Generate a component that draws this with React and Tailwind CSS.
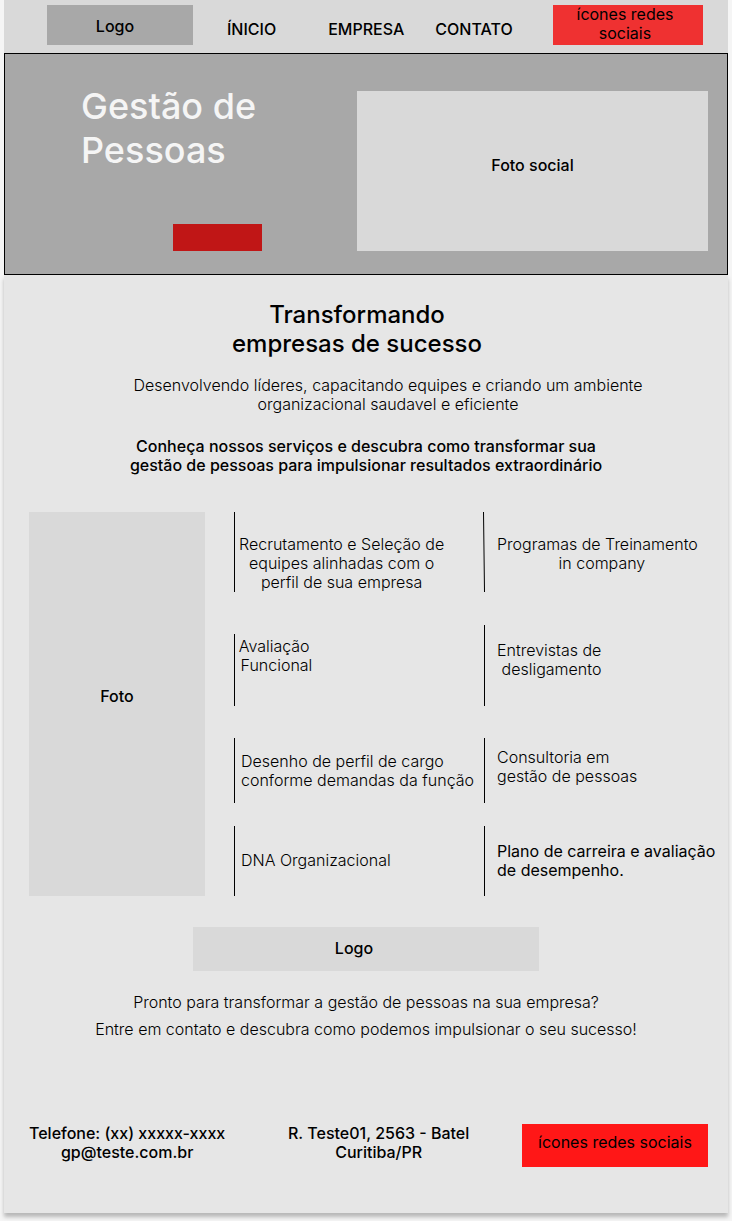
const leftServices = [
  {
    lines: ['Recrutamento e Seleção de', 'equipes alinhadas com o', 'perfil de sua empresa'],
    box: 'h-20 pt-[23px] pl-1 border-l',
    text: 'text-center',
  },
  {
    lines: ['Avaliação', ' Funcional'],
    box: 'mt-[42px] h-[72px] pt-[3px] pl-px border-l',
    text: 'text-center',
  },
  {
    lines: ['Desenho de perfil de cargo', 'conforme demandas da função'],
    box: 'mt-8 h-[65px] pt-[14px] pl-[6px] border-l',
    text: 'text-left',
  },
  {
    lines: ['DNA Organizacional'],
    box: 'mt-[23px] h-[70px] pt-[25px] pl-[6px] border-l',
    text: 'text-left',
  },
];

const rightServices = [
  {
    lines: ['Programas de Treinamento', '  in company'],
    box: 'h-20 pt-[23px] pl-[13px]',
    text: 'text-center',
    slanted: true,
  },
  {
    lines: ['Entrevistas de', 'desligamento'],
    box: 'mt-[33px] h-[81px] pt-4 pl-3 border-l',
    text: 'text-right',
  },
  {
    lines: ['Consultoria em', 'gestão de pessoas'],
    box: 'mt-8 h-[65px] pt-[10px] pl-3 border-l',
    text: 'text-left',
  },
  {
    lines: ['Plano de carreira e avaliação', 'de desempenho.'],
    box: 'mt-[23px] h-[70px] pt-4 pl-3 border-l',
    text: 'text-left font-normal',
  },
];

function Service({ lines, box, text, slanted }) {
  return (
    <li className={`relative flex items-start border-black ${box}`}>
      {slanted && (
        <svg className="absolute top-0 -left-px h-20 w-[2px]" viewBox="0 0 2 80" aria-hidden="true">
          <line x1="0.5" y1="0" x2="1.5" y2="80" stroke="#000" strokeWidth="1" />
        </svg>
      )}
      <p className={`whitespace-pre ${text}`}>
        {lines.map((line) => (
          <span key={line} className="block">
            {line}
          </span>
        ))}
      </p>
    </li>
  );
}

export default function App() {
  return (
    <div className="bg-[#f5f5f5] px-1 pb-2 font-['Inter',sans-serif] text-[16px] leading-[19px] text-black">
      <header className="flex items-start bg-[#d9d9d9] pt-[5px] pr-[25px] pb-2 pl-[43px]">
        <div className="flex h-10 w-[146px] shrink-0 justify-center bg-[#a8a8a8] pt-3 pr-[10px] font-medium">Logo</div>
        <nav className="flex flex-1 pt-[15px] pl-[34px] font-medium">
          <a href="#inicio" className="mr-[52px]">ÍNICIO</a>
          <a href="#empresa" className="mr-[31px]">EMPRESA</a>
          <a href="#contato">CONTATO</a>
        </nav>
        <div className="h-10 w-[150px] shrink-0 bg-[#ef3131] pr-[6px] text-center">
          <p>
            ícones redes
            <br />
            sociais
          </p>
        </div>
      </header>

      <section className="flex items-start justify-between border border-black bg-[#a8a8a8] pr-[19px] pb-[23px]">
        <div className="flex flex-col items-start pt-[30px] pl-[76px]">
          <h1 className="text-[36px] leading-[44px] font-medium text-[#f5f5f5]">
            Gestão de
            <br />
            Pessoas
          </h1>
          <button type="button" aria-label="Contato" className="mt-[52px] ml-[92px] h-[27px] w-[89px] bg-[#c01616]" />
        </div>
        <div className="mt-[37px] flex h-40 w-[351px] items-center justify-center bg-[#d9d9d9] pb-3 font-medium">
          Foto social
        </div>
      </section>

      <main className="bg-[#e6e6e6] pt-[25px] pb-[46px] font-light shadow-[0_4px_4px_rgba(0,0,0,0.25)]">
        <h2 className="pr-[18px] text-center text-[24px] leading-[29px] font-medium">
          Transformando
          <br />
          empresas de sucesso
        </h2>
        <p className="mt-[18px] pl-11 text-center">
          Desenvolvendo líderes, capacitando equipes e criando um ambiente
          <br />
          organizacional saudavel e eficiente
        </p>
        <p className="mt-[23px] text-center font-medium">
          Conheça nossos serviços e descubra como transformar sua
          <br />
          gestão de pessoas para impulsionar resultados extraordinário
        </p>

        <section className="mt-[37px] flex pl-[25px]">
          <div className="flex h-96 w-44 shrink-0 items-center justify-center bg-[#d9d9d9] pb-4 font-medium">Foto</div>
          <ul className="ml-[29px] w-[250px] shrink-0">
            {leftServices.map((service) => (
              <Service key={service.lines[0]} {...service} />
            ))}
          </ul>
          <ul className="flex-1">
            {rightServices.map((service) => (
              <Service key={service.lines[0]} {...service} />
            ))}
          </ul>
        </section>

        <section className="mt-[31px] flex flex-col items-center text-center">
          <div className="h-11 w-[346px] bg-[#d9d9d9] pt-3 pr-6 font-medium">Logo</div>
          <p className="mt-[22px]">Pronto para transformar a gestão de pessoas na sua empresa?</p>
          <p className="mt-2">Entre em contato e descubra como podemos impulsionar o seu sucesso!</p>
        </section>

        <footer className="mt-[85px] flex items-start justify-between pr-5 pl-[25px] text-center font-medium">
          <p>
            Telefone: (xx) xxxxx-xxxx
            <br />
            gp@teste.com.br
          </p>
          <p className="pl-[10px]">
            R. Teste01, 2563 - Batel
            <br />
            Curitiba/PR
          </p>
          <div className="h-[43px] w-[186px] bg-[#ff1717] pt-[9px] font-normal">ícones redes sociais</div>
        </footer>
      </main>
    </div>
  );
}
